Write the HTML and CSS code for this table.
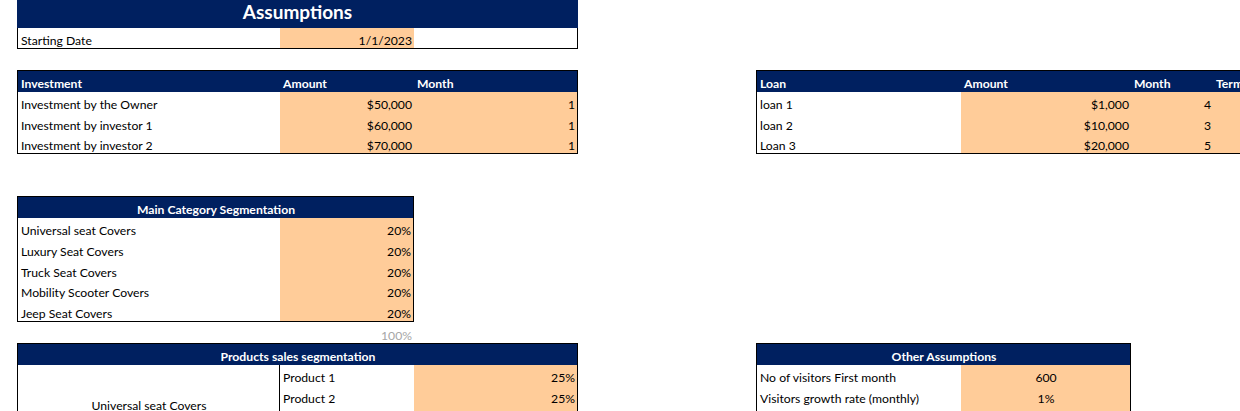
FILE: index.html
```html
<!DOCTYPE html>
<html lang="en">
<head>
<meta charset="utf-8">
<title>Assumptions</title>
<link rel="stylesheet" href="styles.css">
</head>
<body>
<div class="sheet">
  <div class="title">Assumptions</div>

  <div class="start-row">
    <div class="cell">Starting Date</div>
    <div class="cell in r">1/1/2023</div>
    <div class="cell"></div>
  </div>

  <div class="tbl inv">
    <div class="cell hd">Investment</div>
    <div class="cell hd">Amount</div>
    <div class="cell hd">Month</div>
    <div class="cell">Investment by the Owner</div>
    <div class="cell in r">$50,000</div>
    <div class="cell in r">1</div>
    <div class="cell">Investment by investor 1</div>
    <div class="cell in r">$60,000</div>
    <div class="cell in r">1</div>
    <div class="cell">Investment by investor 2</div>
    <div class="cell in r">$70,000</div>
    <div class="cell in r">1</div>
  </div>

  <div class="tbl loan">
    <div class="cell hd">Loan</div>
    <div class="cell hd">Amount</div>
    <div class="cell hd">Month</div>
    <div class="cell hd">Term</div>
    <div class="cell">loan 1</div>
    <div class="cell in r">$1,000</div>
    <div class="cell in r">4</div>
    <div class="cell in r"></div>
    <div class="cell">loan 2</div>
    <div class="cell in r">$10,000</div>
    <div class="cell in r">3</div>
    <div class="cell in r"></div>
    <div class="cell">Loan 3</div>
    <div class="cell in r">$20,000</div>
    <div class="cell in r">5</div>
    <div class="cell in r"></div>
  </div>

  <div class="tbl cat">
    <div class="cell hd c span-all">Main Category Segmentation</div>
    <div class="cell">Universal seat Covers</div>
    <div class="cell in r">20%</div>
    <div class="cell">Luxury Seat Covers</div>
    <div class="cell in r">20%</div>
    <div class="cell">Truck Seat Covers</div>
    <div class="cell in r">20%</div>
    <div class="cell">Mobility Scooter Covers</div>
    <div class="cell in r">20%</div>
    <div class="cell">Jeep Seat Covers</div>
    <div class="cell in r">20%</div>
  </div>

  <div class="cell total r">100%</div>

  <div class="tbl prod">
    <div class="cell hd c span-all">Products sales segmentation</div>
    <div class="cell merged">Universal seat Covers</div>
    <div class="cell">Product 1</div>
    <div class="cell in r">25%</div>
    <div class="cell">Product 2</div>
    <div class="cell in r">25%</div>
    <div class="cell"></div>
    <div class="cell in r"></div>
    <div class="cell"></div>
    <div class="cell in r"></div>
  </div>

  <div class="tbl other">
    <div class="cell hd c span-all">Other Assumptions</div>
    <div class="cell">No of visitors First month</div>
    <div class="cell in c">600</div>
    <div class="cell">Visitors growth rate (monthly)</div>
    <div class="cell in c">1%</div>
    <div class="cell"></div>
    <div class="cell in c"></div>
  </div>
</div>
</body>
</html>
```

FILE: styles.css
```css
html, body {
  margin: 0;
  padding: 0;
  overflow: hidden;
  background: #ffffff;
}

body {
  font-family: Lato, "Liberation Sans", sans-serif;
  font-size: 12.2px;
  color: #000000;
}

.sheet {
  display: grid;
  grid-template-columns: 17px 263px 134px 164px 178px 205px 170px 82px 100px;
  grid-template-rows: 28px repeat(22, 21px);
  width: 1313px;
}

.title {
  grid-column: 2 / 5;
  grid-row: 1;
  background: #002060;
  color: #ffffff;
  font-weight: bold;
  font-size: 19px;
  display: flex;
  align-items: center;
  justify-content: center;
  padding-bottom: 5px;
}

.cell {
  display: flex;
  align-items: flex-end;
  padding: 0 2px 0 3px;
  white-space: nowrap;
  overflow: hidden;
  min-width: 0;
}

.hd {
  background: #002060;
  color: #ffffff;
  font-weight: bold;
  padding-bottom: 1px;
}

.in {
  background: #ffcc99;
}

.r {
  justify-content: flex-end;
}

.c {
  justify-content: center;
}

.span-all {
  grid-column: 1 / -1;
}

.start-row {
  grid-column: 2 / 5;
  grid-row: 2;
  display: grid;
  grid-template-columns: 262px 134px 1fr;
  border: 1px solid #000000;
  border-top: none;
}

.tbl {
  display: grid;
  grid-auto-rows: 1fr;
  border: 1px solid #000000;
}

.inv {
  grid-column: 2 / 5;
  grid-row: 4 / 8;
  grid-template-columns: 262px 134px 1fr;
}

.loan {
  grid-column: 6 / 10;
  grid-row: 4 / 8;
  grid-template-columns: 204px 170px 82px 1fr;
}

.cat {
  grid-column: 2 / 4;
  grid-row: 10 / 16;
  grid-template-columns: 262px 1fr;
}

.total {
  grid-column: 3;
  grid-row: 16;
  color: #a6a6a6;
}

.prod {
  grid-column: 2 / 5;
  grid-row: 17 / 22;
  grid-template-columns: 262px 134px 1fr;
}

.merged {
  grid-row: 2 / 6;
  grid-column: 1;
  justify-content: center;
  align-items: center;
  border-right: 1px solid #000000;
}

.other {
  grid-column: 6 / 8;
  grid-row: 17 / 21;
  grid-template-columns: 204px 1fr;
}
```
